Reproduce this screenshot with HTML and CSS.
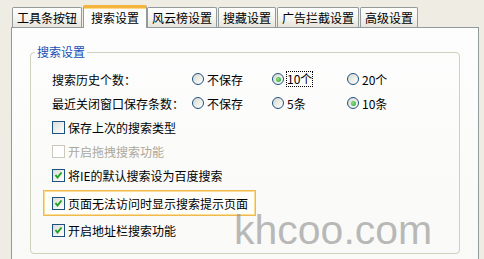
FILE: index.html
```html
<!DOCTYPE html>
<html lang="zh-CN">
<head>
  <meta charset="UTF-8">
  <title>搜索设置</title>
  <link rel="stylesheet" href="styles.css">
</head>
<body>
  <div class="dialog">
    <div class="tabs">
      <div class="tab">工具条按钮</div>
      <div class="tab active">搜索设置</div>
      <div class="tab">风云榜设置</div>
      <div class="tab">搜藏设置</div>
      <div class="tab">广告拦截设置</div>
      <div class="tab">高级设置</div>
    </div>

    <div class="panel">
      <fieldset class="group">
        <legend>搜索设置</legend>
        <div class="options">
          <div class="radio-row">
            <span class="row-label">搜索历史个数：</span>
            <span class="radio"><i class="dot"></i>不保存</span>
            <span class="radio"><i class="dot on"></i><span class="focus">10个</span></span>
            <span class="radio"><i class="dot"></i>20个</span>
          </div>
          <div class="radio-row">
            <span class="row-label">最近关闭窗口保存条数：</span>
            <span class="radio"><i class="dot"></i>不保存</span>
            <span class="radio"><i class="dot"></i>5条</span>
            <span class="radio"><i class="dot on"></i>10条</span>
          </div>

          <div class="check"><i class="box"></i>保存上次的搜索类型</div>
          <div class="check disabled"><i class="box"></i>开启拖拽搜索功能</div>
          <div class="check">
            <i class="box"><svg viewBox="0 0 11 11"><path d="M2.5 5 L4.5 7.5 L8.5 2.5" /></svg></i>将IE的默认搜索设为百度搜索
          </div>
          <div class="check hot">
            <i class="box"><svg viewBox="0 0 11 11"><path d="M2.5 5 L4.5 7.5 L8.5 2.5" /></svg></i>页面无法访问时显示搜索提示页面
          </div>
          <div class="check">
            <i class="box"><svg viewBox="0 0 11 11"><path d="M2.5 5 L4.5 7.5 L8.5 2.5" /></svg></i>开启地址栏搜索功能
          </div>
        </div>
      </fieldset>
    </div>

    <div class="watermark">khcoo.com</div>
  </div>
</body>
</html>
```

FILE: styles.css
```css
body {
  margin: 0;
  font-family: "Noto Sans CJK SC", "Liberation Sans", sans-serif;
  font-size: 12px;
  color: #000;
}
.dialog {
  position: relative;
  width: 484px;
  height: 259px;
  overflow: hidden;
  background: #efede3;
}

/* tab strip */
.tabs {
  display: flex;
  align-items: flex-end;
  gap: 1px;
  height: 27px;
  padding-left: 12px;
}
.tab {
  box-sizing: border-box;
  height: 20px;
  padding: 0 4px;
  line-height: 19px;
  border: 1px solid #919b9c;
  border-bottom: none;
  border-radius: 2px 2px 0 0;
  background: linear-gradient(#ffffff, #f3f2ec 60%, #e6e4da);
  white-space: nowrap;
}
.tab.active {
  position: relative;
  z-index: 1;
  height: 23px;
  margin-bottom: -1px;
  margin-right: -1px;
  padding: 0 7px;
  line-height: 19px;
  border-top: 3px solid #f3b33d;
  box-shadow: inset 0 1px 0 #ffd985;
  background: #fdfdfd;
}

/* page body */
.panel {
  box-sizing: border-box;
  width: 468px;
  height: 240px;
  margin-left: 11px;
  border: 1px solid #919b9c;
  border-bottom: none;
  background: linear-gradient(#fdfdfd, #f9f9f7);
}
.group {
  box-sizing: border-box;
  width: 430px;
  margin: 17px 0 0 18px;
  padding: 0;
  border: 1px solid #d0d0bf;
  border-radius: 4px;
}
.group legend {
  margin-left: 4px;
  padding: 0 2px;
  line-height: 14px;
  color: #1550b8;
}
.options {
  display: flex;
  flex-direction: column;
  padding: 8px 0 11px 21px;
}

.radio-row {
  display: grid;
  grid-template-columns: 140px 80px 75px auto;
  align-items: center;
  height: 24px;
}
.radio {
  display: flex;
  align-items: center;
}
.dot {
  box-sizing: border-box;
  display: flex;
  align-items: center;
  justify-content: center;
  width: 12px;
  height: 12px;
  margin-right: 3px;
  border: 1px solid #1c5180;
  border-radius: 50%;
  background: linear-gradient(135deg, #d8d8d0, #ffffff);
}
.dot.on::after {
  content: "";
  width: 5px;
  height: 5px;
  border-radius: 50%;
  background: radial-gradient(circle at 40% 40%, #8ee08a, #21a121);
}
.focus {
  line-height: 14px;
  outline: 1px dotted #000;
}

.check {
  display: flex;
  align-items: center;
  height: 24px;
}
.box {
  box-sizing: border-box;
  display: flex;
  width: 13px;
  height: 13px;
  margin-right: 3px;
  border: 1px solid #1c5180;
  background: linear-gradient(135deg, #dcdcd7, #ffffff);
}
.box svg {
  width: 11px;
  height: 11px;
}
.box path {
  fill: none;
  stroke: #21a121;
  stroke-width: 2;
}
.check.disabled {
  color: #aca899;
}
.check.disabled .box {
  border-color: #cac8bb;
  background: #fff;
}
.check.hot {
  box-sizing: border-box;
  align-self: flex-start;
  height: 26px;
  margin: 3px 0 2px -9px;
  padding: 0 7px 0 8px;
  border: 1px solid #efb94f;
  box-shadow: inset 0 0 0 1px #fcdc92;
  background: #fffef9;
}

.watermark {
  position: absolute;
  left: 234px;
  top: 210px;
  font-family: "Liberation Sans", Arial, sans-serif;
  font-size: 41px;
  line-height: 41px;
  color: rgba(140, 140, 140, 0.6);
}
```
